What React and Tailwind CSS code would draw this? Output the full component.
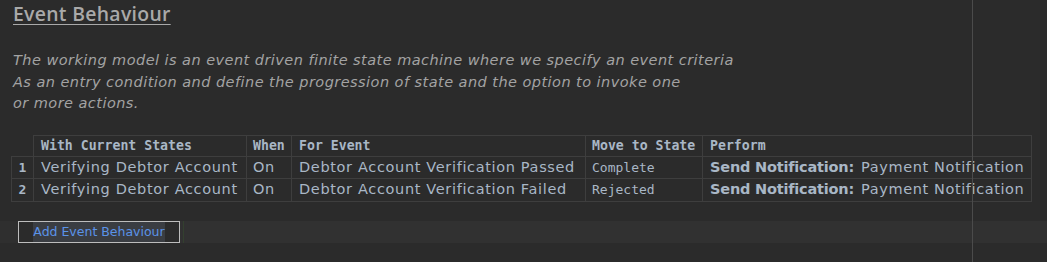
import React from 'react'

const ROWS = [
  { n: 1, from: 'Verifying Debtor Account', when: 'On', event: 'Debtor Account Verification Passed', to: 'Complete', action: 'Send Notification:', target: 'Payment Notification' },
  { n: 2, from: 'Verifying Debtor Account', when: 'On', event: 'Debtor Account Verification Failed', to: 'Rejected', action: 'Send Notification:', target: 'Payment Notification' },
]

const sans = "font-['DejaVu_Sans','Liberation_Sans',sans-serif]"
const title = "font-['Open_Sans','Liberation_Sans',sans-serif]"
const mono = "font-['DejaVu_Sans_Mono','Liberation_Mono',monospace]"

function App() {
  return (
    <div className="relative w-[1047px] h-[262px] overflow-hidden bg-[#2b2b2b] text-[#a9b7c6]">
      {/* right margin guide */}
      <div className="absolute top-0 bottom-0 left-[972px] w-px bg-[#4b4b4b]" />

      <div className="pl-[13px]">
        <h1 className={`${title} text-[19.4px] leading-[28px] font-semibold text-[#a9a9a9] underline underline-offset-[3px] decoration-1 tracking-[0.3px]`}>
          Event Behaviour
        </h1>

        <p className={`${sans} italic text-[14.5px] leading-[21.5px] text-[#a3a3a3] mt-[22px] tracking-[0.45px]`}>
          The working model is an event driven finite state machine where we specify an event criteria<br />
          As an entry condition and define the progression of state and the option to invoke one<br />
          or more actions.
        </p>
      </div>

      <table className="ml-[11px] mt-[20px] border-collapse">
        <thead>
          <tr className="h-[21px]">
            <th className="w-[22px] p-0" />
            <th className={`${mono} text-[13.2px] font-bold text-left border border-[#3e3e3e] px-[7px] w-[213px]`}>With Current States</th>
            <th className={`${mono} text-[13.2px] font-bold text-left border border-[#3e3e3e] px-[6px] w-[45px]`}>When</th>
            <th className={`${mono} text-[13.2px] font-bold text-left border border-[#3e3e3e] px-[7px] w-[294px]`}>For Event</th>
            <th className={`${mono} text-[13.2px] font-bold text-left border border-[#3e3e3e] px-[6px] w-[117px]`}>Move to State</th>
            <th className={`${mono} text-[13.2px] font-bold text-left border border-[#3e3e3e] px-[7px] w-[328px]`}>Perform</th>
          </tr>
        </thead>
        <tbody>
          {ROWS.map(r => (
            <tr key={r.n} className="h-[22px]">
              <td className={`${mono} text-[13px] font-bold text-center border border-[#3e3e3e] p-0`}>{r.n}</td>
              <td className={`${sans} text-[14.5px] tracking-[0.65px] border border-[#3e3e3e] px-[7px] py-0 whitespace-nowrap`}>{r.from}</td>
              <td className={`${sans} text-[14.5px] tracking-[0.65px] border border-[#3e3e3e] px-[6px] py-0`}>{r.when}</td>
              <td className={`${sans} text-[14.5px] tracking-[0.65px] border border-[#3e3e3e] px-[7px] py-0 whitespace-nowrap`}>{r.event}</td>
              <td className={`${mono} text-[13px] border border-[#3e3e3e] px-[6px] py-0`}>{r.to}</td>
              <td className={`${sans} text-[14.5px] tracking-[0.6px] border border-[#3e3e3e] px-[7px] py-0 whitespace-nowrap`}>
                <span className="font-bold tracking-[-0.2px]">{r.action}</span>
                <span className="ml-[7px]">{r.target}</span>
              </td>
            </tr>
          ))}
        </tbody>
      </table>

      <div className="mt-[19px] h-[22px] flex items-stretch bg-[#313131]">
        <div className="w-[18px] bg-[#2f2f2f]" />
        <button className={`${sans} w-[162px] border border-[#bdbdbd] flex items-center justify-center text-[12.5px] text-[#5a93e8] bg-[#2b2b2b]`}>
          <span className="bg-[#3a3d42] leading-[20px]">Add Event Behaviour</span>
        </button>
        <div className="w-[3px]" />
        <div className="w-px bg-[#33402f]" />
      </div>
    </div>
  )
}

export default App
